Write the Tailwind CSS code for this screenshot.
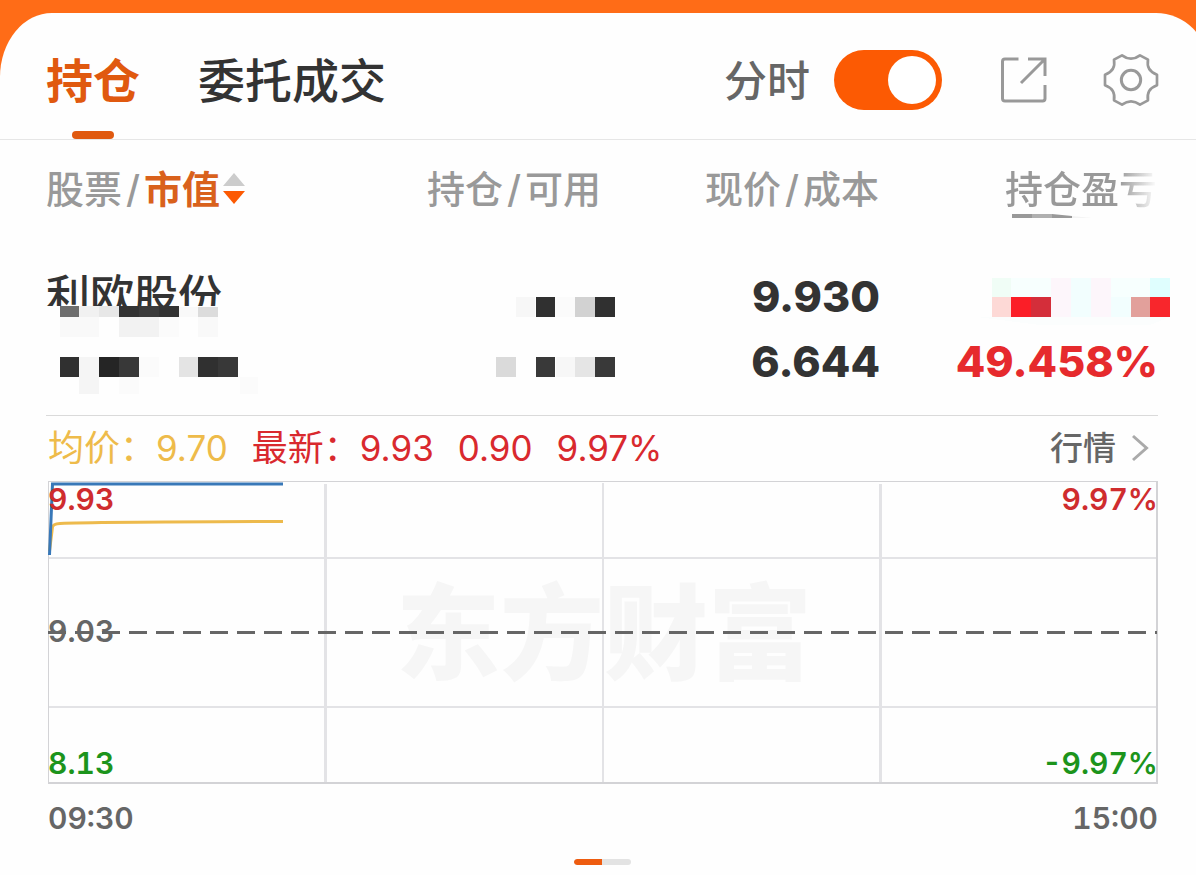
<!DOCTYPE html>
<html lang="zh-CN">
<head>
<meta charset="utf-8">
<meta name="viewport" content="width=device-width, initial-scale=1">
<title>持仓</title>
<script src="https://cdn.jsdelivr.net/npm/@tailwindcss/browser@4"></script>
</head>
<body class="min-h-screen overflow-x-hidden bg-[#ff6c17] pt-[13px] font-['Inter','Noto_Sans_CJK_SC',sans-serif]">
<div class="-mr-3 min-h-[calc(100vh-13px)] rounded-tl-[52px_64px] rounded-tr-[52px] bg-[#fefefe] pr-3">
  <header class="flex h-[127px] items-center justify-between border-b border-[#e6e6e6] pr-[37px] pl-[46px]">
    <nav class="flex h-full gap-[58px] text-[47px] leading-[136px]">
      <a href="#" aria-current="page" class="relative font-bold text-[#e0590f]">持仓<span class="absolute bottom-0 left-[26px] h-2 w-[42px] rounded-full bg-[#e0590f]"></span></a>
      <a href="#" class="font-medium text-[#333]">委托成交</a>
    </nav>
    <div class="flex items-center pt-2">
      <label for="minute" class="mr-6 pt-[2px] text-[43px] leading-[60px] font-medium text-[#666]">分时</label>
      <input id="minute" type="checkbox" role="switch" checked class="h-[60px] w-[108px] appearance-none rounded-full bg-[#ccc] p-[6px] before:block before:size-12 before:rounded-full before:bg-white checked:bg-[#fc5a03] checked:before:ml-auto">
      <button type="button" aria-label="分享" class="ml-[58px]">
        <svg class="block size-12" viewBox="0 0 48 48" fill="none" stroke="#999" stroke-width="3"><path d="M18.500 3H5Q2.500 3 2.500 5.500V42.500Q2.500 45 5 45H42.500Q45 45 45 42.500V29M28 3H45V20M45 3L21 27"/></svg>
      </button>
      <button type="button" aria-label="设置" class="ml-[55px]">
        <svg class="block h-[54px] w-[56px]" viewBox="-84 -81 168 162" fill="none" stroke="#999" stroke-width="8" stroke-linejoin="round"><path d="M-27-74Q0-54 27-74L51-61Q45-28 78-16V16Q45 28 51 61L27 74Q0 54-27 74L-51 61Q-45 28-78 16V-16Q-45-28-51-61Z"/><circle r="29" stroke-width="9"/></svg>
      </button>
    </div>
  </header>

  <main class="pr-[38px] pl-[46px]">
    <table class="w-full table-fixed border-collapse text-right">
      <thead>
        <tr class="h-[98px] text-[38px] leading-[48px] text-[#999]">
          <th scope="col" class="p-0 text-left font-medium whitespace-nowrap"><button type="button" class="flex items-center">股票<span class="mx-1">/</span><span class="font-bold text-[#d9611c]">市值</span><svg class="ml-[2px] h-8 w-6" viewBox="0 0 24 32"><path d="M12 0L23 13H1Z" fill="#ccc"/><path d="M1 18H23L12 31Z" fill="#fc5a03"/></svg></button></th>
          <th scope="col" class="p-0 pr-px font-medium">持仓<span class="mx-1">/</span>可用</th>
          <th scope="col" class="p-0 pr-px font-medium">现价<span class="mx-1">/</span>成本</th>
          <th scope="col" class="relative p-0 pr-px font-medium"><span class="bg-linear-to-r from-[#999] from-75% to-transparent to-100% bg-clip-text text-transparent">持仓盈亏</span>
            <svg class="absolute right-[66px] bottom-5 h-1 w-20" viewBox="0 0 80 4"><path d="M0 0H20V4H0Z" fill="#999"/><path d="M20 0H40V4H20Z" fill="#b0b0b0"/><path d="M40 0L60 2V4H40Z" fill="#999"/><path d="M60 2L80 4H60Z" fill="#f4f4f4"/></svg>
          </th>
        </tr>
      </thead>
      <tbody>
        <tr class="border-b border-[#dadada] text-[43px] leading-[65px] font-extrabold text-[#333]">
          <td class="p-0 pt-[26px] pb-[21px] text-left align-top">
            <div class="relative h-[130px]">
              <div class="text-[44px] font-medium">利欧股份</div>
              <svg class="absolute top-0 left-0 h-[130px] w-[220px]" viewBox="46 264 220 130" shape-rendering="crispEdges">
                <path fill="#fefefe" d="M46 306H260V394H46Z"/>
                <path fill="#6e6e6e" d="M60 306h19v11H60Z"/><path fill="#f1f1f1" d="M79 306h20v11H79Z"/><path fill="#e7e7e7" d="M99 306h20v11H99Z"/>
                <path fill="#333" d="M119 306h60v11h-60Z"/><path fill="#3b3b3b" d="M139 306h20v11h-20Z"/><path fill="#f9f9f9" d="M179 307h19v10h-19Z"/><path fill="#dcdcdc" d="M198 307h20v10h-20Z"/>
                <path fill="#f9f9f9" d="M60 317h39v20H60ZM198 317h20v20h-20Z"/><path fill="#f2f2f2" d="M119 317h40v20h-40Z"/><path fill="#fbfbfb" d="M159 317h20v20h-20Z"/>
                <path fill="#303030" d="M60 357h19v20H60ZM198 357h20v20h-20Z"/><path fill="#f5f5f5" d="M79 357h20v37H79Z"/><path fill="#252525" d="M99 357h20v20H99Z"/><path fill="#383838" d="M119 357h20v20h-20ZM218 357h20v20h-20Z"/>
                <path fill="#fbfbfb" d="M139 357h20v20h-20ZM119 377h20v17h-20ZM240 377h18v17h-18Z"/><path fill="#e4e4e4" d="M179 357h19v20h-19Z"/>
              </svg>
            </div>
          </td>
          <td class="p-0 pt-[26px] pb-[21px] align-top">
            <svg class="ml-auto block h-[130px] w-[120px] translate-x-[14px]" viewBox="496 264 120 130" shape-rendering="crispEdges">
              <path fill="#f7f7f7" d="M516 297h19v20h-19ZM556 357h19v20h-19Z"/><path fill="#303030" d="M536 297h19v20h-19ZM595 297h20v20h-20Z"/><path fill="#fbfbfb" d="M555 297h20v20h-20Z"/><path fill="#d2d2d2" d="M575 297h20v20h-20Z"/>
              <path fill="#dadada" d="M496 357h20v20h-20Z"/><path fill="#393939" d="M536 357h19v20h-19ZM595 357h20v20h-20Z"/><path fill="#e5e5e5" d="M575 357h20v20h-20Z"/>
            </svg>
          </td>
          <td class="p-0 pt-[26px] pb-[21px] align-top"><div>9.930</div><div>6.644</div></td>
          <td class="p-0 pt-[26px] pb-[21px] align-top">
            <div class="relative pt-[65px] text-[#e62a2d]">49.458%
              <svg class="absolute top-0 -right-[13px] h-[65px] w-[194px]" viewBox="977 264 194 65" shape-rendering="crispEdges">
                <path fill="#f0fdf6" d="M992 278h19v19h-19Z"/><path fill="#f7fffe" d="M1011 278h40v19h-40ZM1110 278h40v19h-40Z"/><path fill="#fdf6fb" d="M1051 278h20v39h-20ZM1091 278h20v39h-20Z"/><path fill="#f2fefe" d="M1071 278h20v39h-20ZM1111 297h20v20h-20Z"/><path fill="#dffefe" d="M1150 278h20v19h-20Z"/>
                <path fill="#fdd9d6" d="M992 297h19v20h-19Z"/><path fill="#fb1e27" d="M1011 297h20v20h-20Z"/><path fill="#d42e3a" d="M1031 297h20v20h-20Z"/><path fill="#e2a09b" d="M1131 297h19v20h-19Z"/><path fill="#f8262c" d="M1150 297h20v20h-20Z"/>
                <path fill="#fbfdfd" d="M977 317H1170L1150 325H1040Z"/>
              </svg>
            </div>
          </td>
        </tr>
      </tbody>
    </table>

    <div class="flex h-[65px] items-center justify-between pb-[2px] pl-[2px] text-[36px] leading-[62px]">
      <div class="flex text-[#d9292e]">
        <span class="mr-6 text-[#eebb4a]">均价：<span class="text-[35px]">9.70</span></span>
        <span class="mr-6">最新：<span class="text-[35px]">9.93</span></span>
        <span class="mr-6 text-[35px]">0.90</span>
        <span class="text-[35px]">9.97%</span>
      </div>
      <a href="#" class="flex items-center pr-[9px] text-[33px] font-medium text-[#666]">行情<svg class="ml-[15px] h-7 w-[18px]" viewBox="0 0 18 28" fill="none" stroke="#aaa" stroke-width="3"><path d="M2 2L15.500 14L2 26"/></svg></a>
    </div>

    <section class="relative ml-[2px] text-[30px] leading-9 font-semibold tabular-nums" aria-label="分时走势">
      <svg class="block w-full" viewBox="0 0 1110 303">
        <text x="556" y="191" text-anchor="middle" font-family="Noto Sans CJK SC" font-weight="900" font-size="104" fill="#f6f6f6">东方财富</text>
        <g fill="none" stroke="#e3e3e6">
          <path stroke-width="2" d="M0 77H1109M0 226H1109M555 2V301"/>
          <path stroke-width="3" d="M277.500 3V301M832.500 3V301"/>
        </g>
        <path d="M0 .5H1109M.5 0V302" fill="none" stroke="#d3d3d6"/>
        <path d="M1109 0V302H0" fill="none" stroke="#d3d3d6" stroke-width="2"/>
        <path d="M0 151.500H1109" stroke="#666" stroke-width="3" stroke-dasharray="18 9"/>
        <path d="M1.500 70L4.500 46Q5 43 12 42.500Q45 41 235 40.500" fill="none" stroke="#edba4c" stroke-width="3"/>
        <path d="M1.500 74L4.500 3H235" fill="none" stroke="#3878b8" stroke-width="3"/>
      </svg>
      <span class="absolute top-0 left-0 text-[#cf2c2e]">9.93</span>
      <span class="absolute top-0 right-0 text-[#cf2c2e]">9.97%</span>
      <span class="absolute top-[132px] left-0 text-[#666]">9.03</span>
      <span class="absolute bottom-[3px] left-0 text-[#1c941c]">8.13</span>
      <span class="absolute right-0 bottom-[3px] text-[#1c941c]">-9.97%</span>
    </section>
    <div class="mt-4 ml-[2px] flex justify-between text-[30px] leading-9 font-semibold text-[#666] tabular-nums"><time>09:30</time><time>15:00</time></div>
    <div class="mx-auto mt-[23px] flex h-[6px] w-[57px] overflow-hidden rounded-full bg-[#e3e3e3]"><span class="w-7 rounded-l-full rounded-r-sm bg-[#ee5c10]"></span></div>
  </main>
</div>
</body>
</html>
